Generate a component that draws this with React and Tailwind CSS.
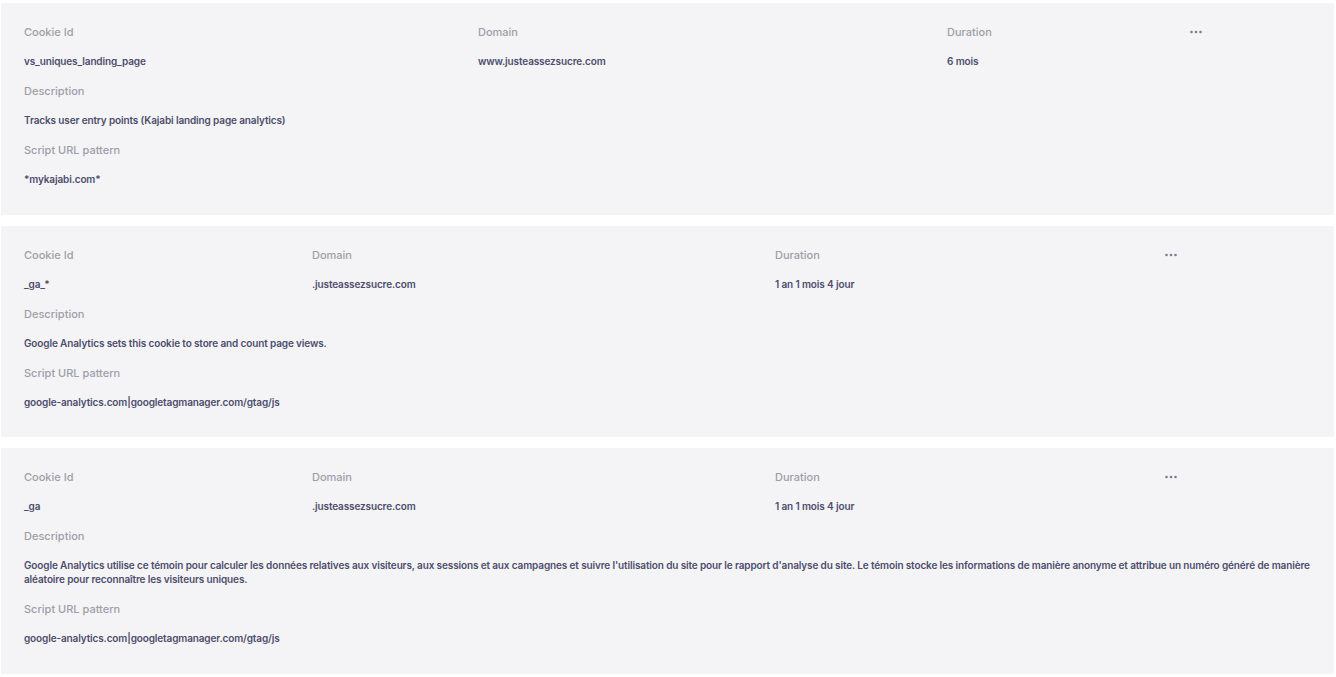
import React from "react";

const cards = [
  {
    cols: "grid-cols-[454px_469px_243px_1fr]",
    id: "vs_uniques_landing_page",
    domain: "www.justeassezsucre.com",
    duration: "6 mois",
    desc: "Tracks user entry points (Kajabi landing page analytics)",
    script: "*mykajabi.com*",
  },
  {
    cols: "grid-cols-[288px_463px_390px_1fr]",
    id: "_ga_*",
    domain: ".justeassezsucre.com",
    duration: "1 an 1 mois 4 jour",
    desc: "Google Analytics sets this cookie to store and count page views.",
    script: "google-analytics.com|googletagmanager.com/gtag/js",
  },
  {
    cols: "grid-cols-[288px_463px_390px_1fr]",
    id: "_ga",
    domain: ".justeassezsucre.com",
    duration: "1 an 1 mois 4 jour",
    desc: "Google Analytics utilise ce témoin pour calculer les données relatives aux visiteurs, aux sessions et aux campagnes et suivre l'utilisation du site pour le rapport d'analyse du site. Le témoin stocke les informations de manière anonyme et attribue un numéro généré de manière aléatoire pour reconnaître les visiteurs uniques.",
    script: "google-analytics.com|googletagmanager.com/gtag/js",
  },
];

function Label({ children }) {
  return <div className="text-[11px] leading-[16px] text-[#9e9ea7] font-medium">{children}</div>;
}

function Value({ children }) {
  return (
    <div className="text-[10px] leading-[14px] text-[#4d4d6b] font-semibold tracking-[-0.13px] -mt-[0.5px] mb-[0.5px]">
      {children}
    </div>
  );
}

function Dots() {
  return (
    <svg width="12" height="16" viewBox="0 0 12 16" className="block">
      <circle cx="1.5" cy="8" r="1.3" fill="#7b7b96" />
      <circle cx="6" cy="8" r="1.3" fill="#7b7b96" />
      <circle cx="10.5" cy="8" r="1.3" fill="#7b7b96" />
    </svg>
  );
}

function Card({ c }) {
  return (
    <div className="bg-[#f4f4f7] pl-[23px] pr-[18px] pt-[21px] pb-[28px] flex flex-col gap-[14.5px]">
      <div className={`grid ${c.cols}`}>
        <Label>Cookie Id</Label>
        <Label>Domain</Label>
        <Label>Duration</Label>
        <Dots />
      </div>
      <div className={`grid ${c.cols}`}>
        <Value>{c.id}</Value>
        <Value>{c.domain}</Value>
        <Value>{c.duration}</Value>
        <div />
      </div>
      <Label>Description</Label>
      <Value>{c.desc}</Value>
      <Label>Script URL pattern</Label>
      <Value>{c.script}</Value>
    </div>
  );
}

export default function App() {
  return (
    <div
      className="w-[1336px] h-[677px] bg-white pt-[3px] pl-[1px] pr-[2px] flex flex-col gap-[11px] overflow-hidden"
      style={{ fontFamily: "Inter, 'Noto Sans', sans-serif" }}
    >
      {cards.map((c, i) => (
        <Card key={i} c={c} />
      ))}
    </div>
  );
}
